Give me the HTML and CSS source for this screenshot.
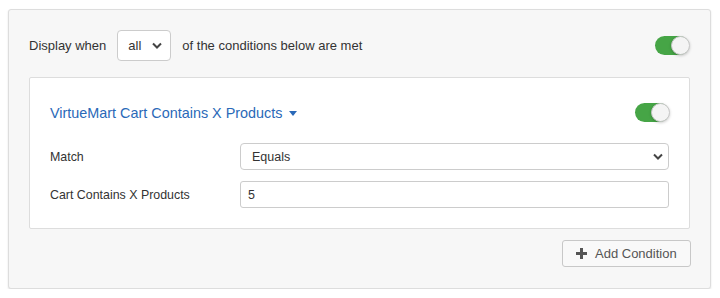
FILE: index.html
```html
<!DOCTYPE html>
<html lang="en">
<head>
	<meta charset="UTF-8">
	<title>Conditions</title>
	<link rel="stylesheet" href="styles.css">
</head>
<body>
	<div class="panel">
		<div class="row-top">
			<span class="label-inline">Display when</span>
			<select class="sel sel-small">
				<option>all</option>
				<option>any</option>
			</select>
			<span class="label-inline">of the conditions below are met</span>
			<span class="toggle"><span class="knob"></span></span>
		</div>

		<div class="card">
			<div class="card-head">
				<a href="#" class="card-title">VirtueMart Cart Contains X Products <span class="caret"></span></a>
				<span class="toggle"><span class="knob"></span></span>
			</div>
			<div class="field">
				<label class="field-label">Match</label>
				<select class="sel sel-wide">
					<option>Equals</option>
				</select>
			</div>
			<div class="field">
				<label class="field-label">Cart Contains X Products</label>
				<input class="inp" type="text" value="5">
			</div>
		</div>

		<div class="actions">
			<button class="btn">
				<svg width="11" height="11" viewBox="0 0 11 11"><path d="M4 0h3v4h4v3H7v4H4V7H0V4h4z" fill="#555"/></svg>
				Add Condition
			</button>
		</div>
	</div>
</body>
</html>
```

FILE: styles.css
```css
* {
	margin: 0;
	padding: 0;
	box-sizing: border-box;
}
body {
	font-family: "Liberation Sans", Arial, sans-serif;
	font-size: 13px;
	color: #333;
	background: #fff;
}
.panel {
	width: 703px;
	height: 280px;
	margin: 9px 0 0 8px;
	padding: 20px 20px 20px 20px;
	background-color: #f7f7f7;
	border: 1px solid #ddd;
	border-radius: 3px;
	box-shadow: 0 1px 2px rgba(0,0,0,.12);
}
.row-top {
	display: flex;
	align-items: center;
	height: 31px;
}
.row-top .sel-small {
	margin: 0 11px 0 11px;
}
.row-top .toggle {
	margin-left: auto;
	margin-right: 1px;
}
.sel {
	-webkit-appearance: none;
	appearance: none;
	font-family: inherit;
	font-size: 13px;
	color: #333;
	background-color: #fff;
	background-image: url("data:image/svg+xml,%3Csvg xmlns='http://www.w3.org/2000/svg' width='10' height='7' viewBox='0 0 10 7'%3E%3Cpath d='M1 1.5l4 4 4-4' fill='none' stroke='%23444' stroke-width='2'/%3E%3C/svg%3E");
	background-repeat: no-repeat;
	border: 1px solid #ccc;
	border-radius: 4px;
	outline: none;
}
.sel-small {
	width: 54px;
	height: 31px;
	padding-left: 10px;
	background-position: right 8px center;
}
.sel-wide {
	flex: 1;
	height: 27px;
	padding-left: 11px;
	font-size: 12.5px;
	background-position: right 5px center;
}
.toggle {
	position: relative;
	display: inline-block;
	width: 34px;
	height: 19px;
	border-radius: 10px;
	background-color: #46a546;
}
.knob {
	position: absolute;
	right: -1px;
	top: 0;
	width: 19px;
	height: 19px;
	border-radius: 50%;
	background-color: #f4f4f4;
	border: 1px solid #c8c8c8;
	box-shadow: 0 1px 3px rgba(0,0,0,.2);
}
.card {
	margin-top: 16px;
	height: 152px;
	padding: 25px 20px 20px 20px;
	background-color: #fff;
	border: 1px solid #ddd;
	border-radius: 2px;
}
.card-head {
	display: flex;
	align-items: center;
	justify-content: space-between;
	height: 19px;
	margin-bottom: 21px;
}
.card-title {
	font-size: 14.4px;
	color: #2a69b8;
	text-decoration: none;
}
.caret {
	display: inline-block;
	width: 0;
	height: 0;
	margin-left: 3px;
	vertical-align: middle;
	border-top: 5px solid #2a69b8;
	border-left: 4px solid transparent;
	border-right: 4px solid transparent;
}
.card-head .toggle {
	margin-right: 0;
}
.field {
	display: flex;
	align-items: center;
	margin-bottom: 11px;
}
.field:last-child {
	margin-bottom: 0;
}
.field-label {
	width: 190px;
	font-size: 12.4px;
}
.inp {
	flex: 1;
	height: 27px;
	padding-left: 7px;
	font-family: inherit;
	font-size: 12.5px;
	color: #333;
	border: 1px solid #ccc;
	border-radius: 3px;
	outline: none;
}
.actions {
	display: flex;
	justify-content: flex-end;
	margin-top: 11px;
	margin-right: -1px;
}
.btn {
	display: flex;
	align-items: center;
	gap: 8px;
	width: 129px;
	height: 27px;
	padding-left: 13px;
	font-family: inherit;
	font-size: 13px;
	color: #555;
	background-color: #f9f9f9;
	border: 1px solid #c8c8c8;
	border-radius: 3px;
	cursor: pointer;
}
```
